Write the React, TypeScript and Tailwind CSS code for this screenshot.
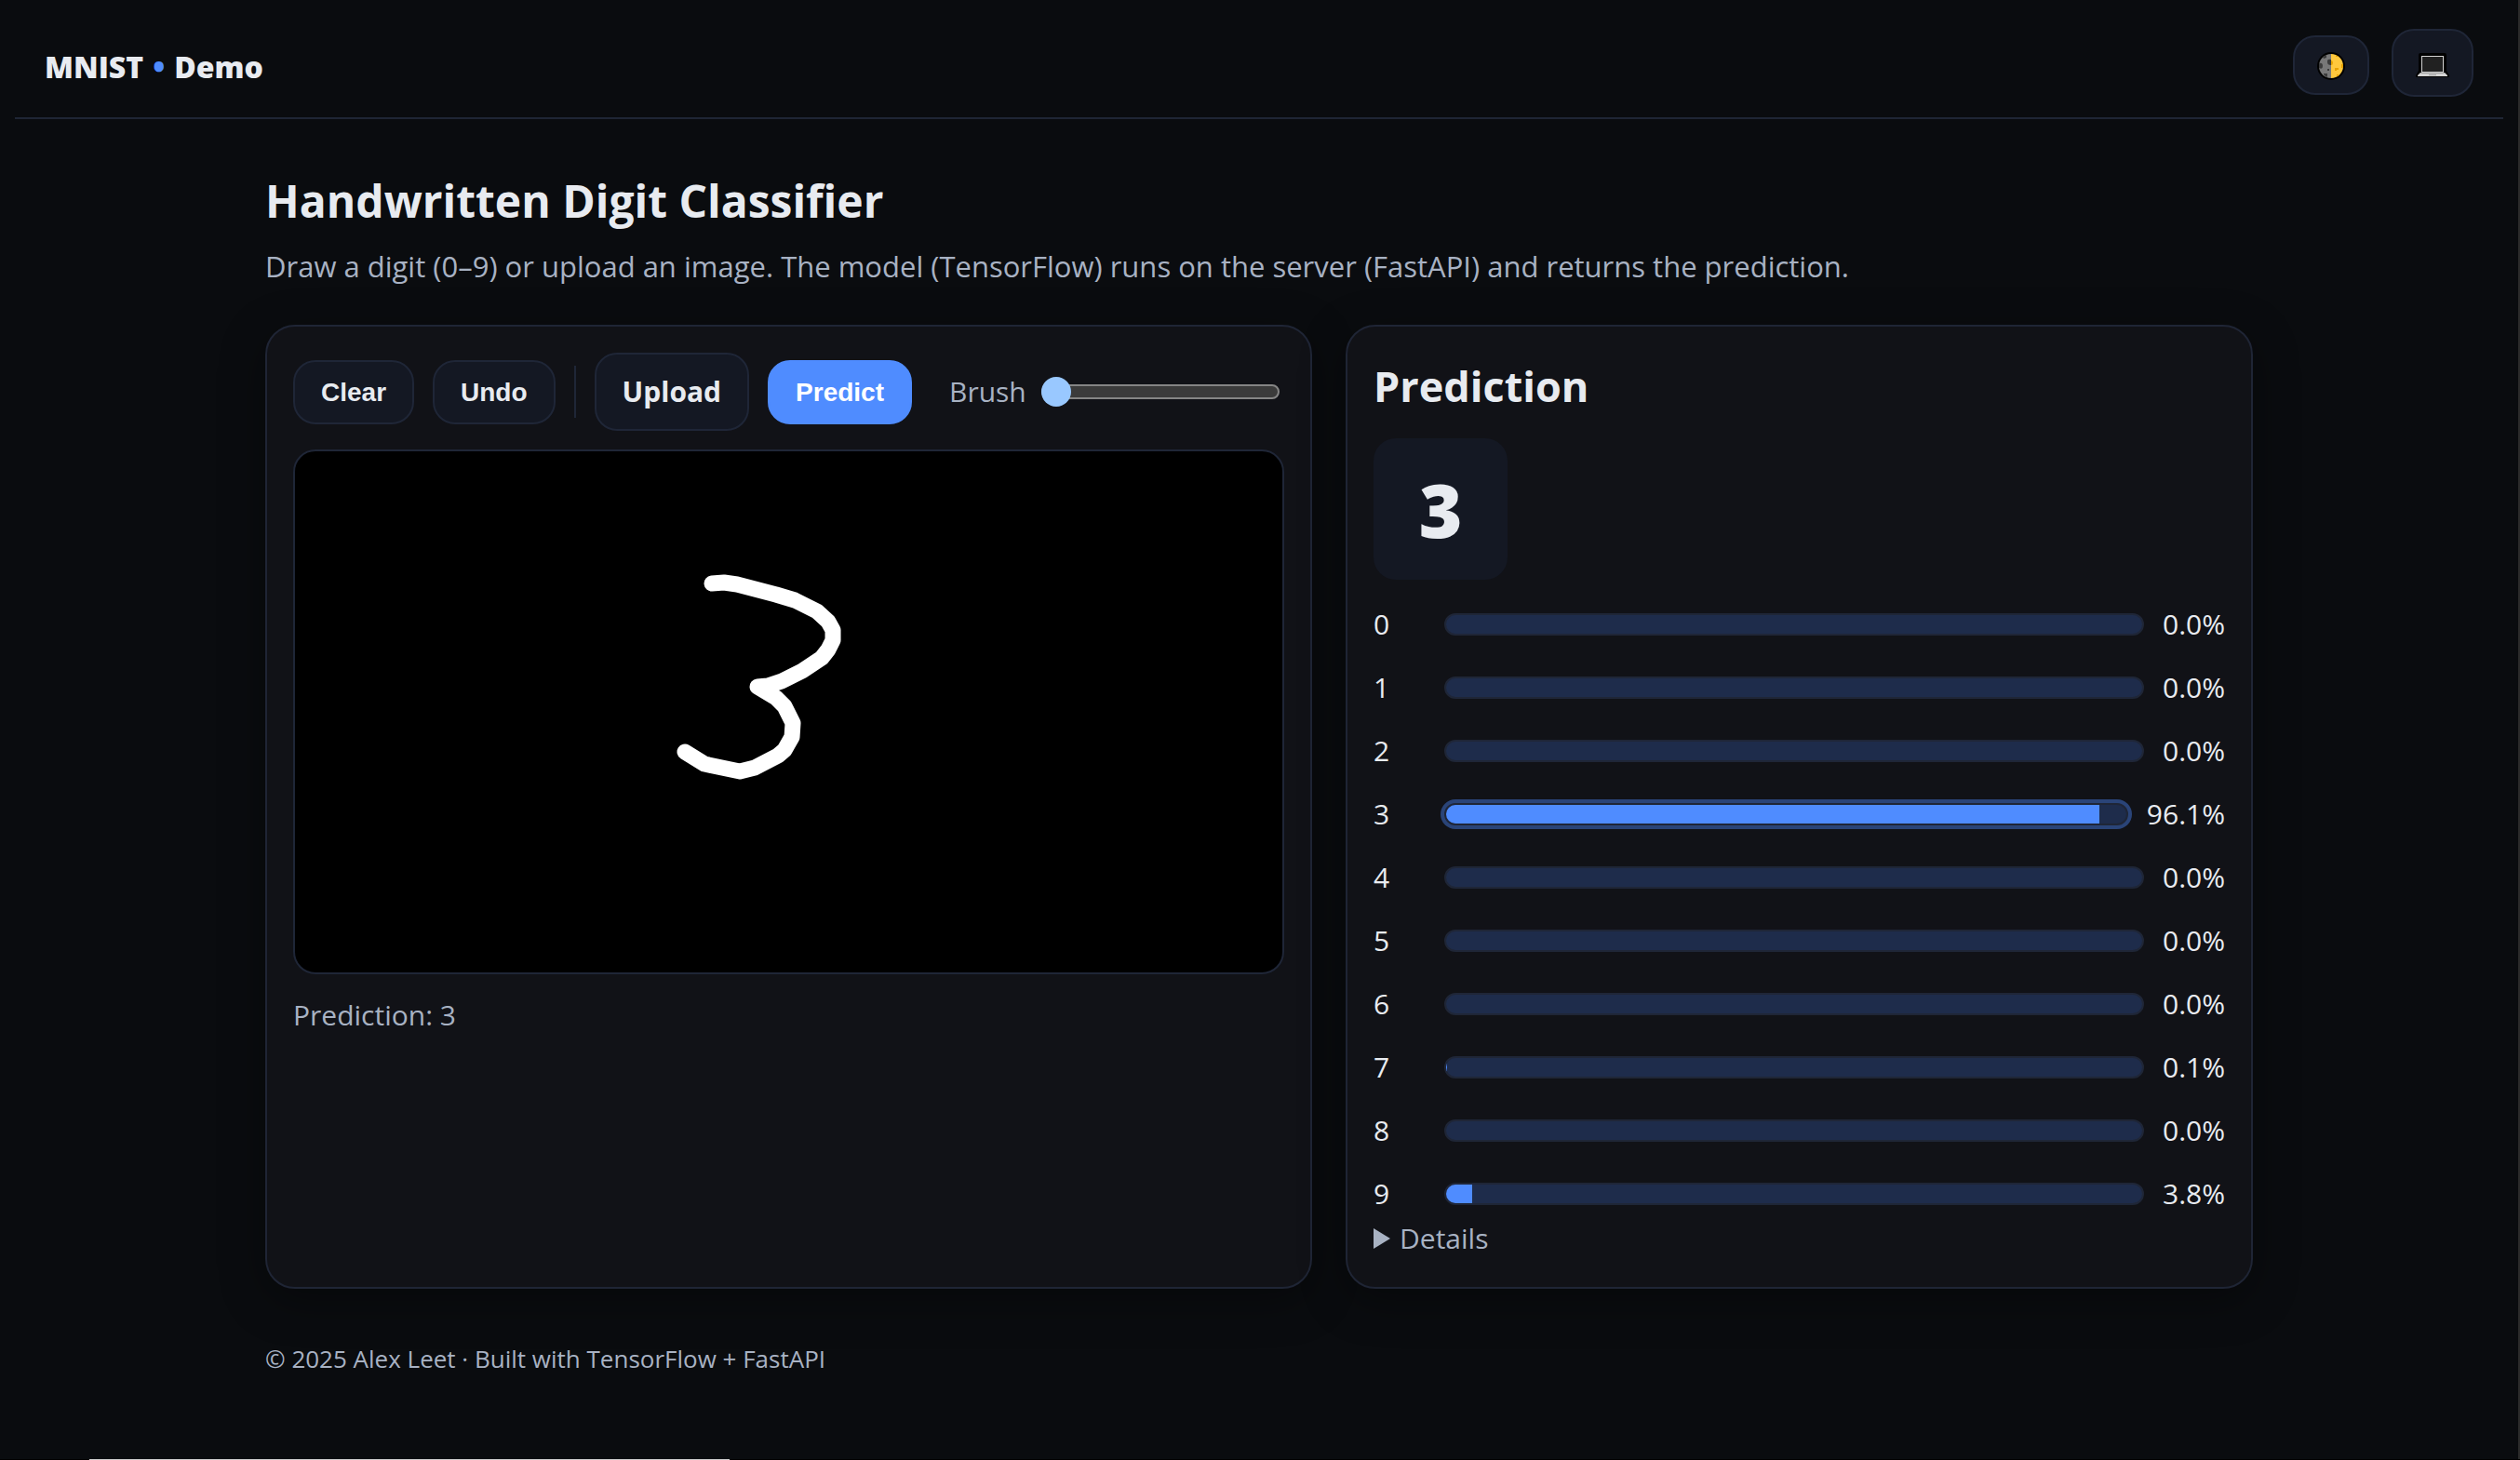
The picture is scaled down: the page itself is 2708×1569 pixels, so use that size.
import { useState } from "react";

const scores = [0, 0, 0, 96.1, 0, 0, 0, 0.1, 0, 3.8];

const control =
  "rounded-3xl border-2 border-[#1f2637] bg-[#141823] text-[#e8ebf0]";
const card =
  "rounded-[32px] border-2 border-[#1f2535] bg-[#111217] p-7 shadow-[0_12px_48px_rgba(0,0,0,0.35)]";

function HalfMoon() {
  return (
    <svg viewBox="0 0 30 30" className="size-[30px]" aria-hidden="true">
      <circle cx="15" cy="15" r="15" fill="#000" />
      <path d="M15 2a13 13 0 0 0 0 26z" fill="#787878" />
      <path d="M15 2a13 13 0 0 1 0 26z" fill="#ffc83d" />
      <path d="M6 5l4-2v3l-3 1zM11 9q1-2 4-1v6q-4 0-4-3zM2 12q4-1 4 3t-4 2zM11 18h2v2h-2zM7 23h4v4q-3-1-4-3z" fill="#3b3b3b" />
      <path d="M15 9q2 0 2 2.500t-2 2.500zM19 17h4v2h-2v1h-2zM26 13h2v4h-2zM20 3l3 2h-3zM21 24h2v2h-2z" fill="#e8a200" />
    </svg>
  );
}

function Laptop() {
  return (
    <svg viewBox="0 0 36 30" className="h-[30px] w-9" aria-hidden="true">
      <path d="M5 1h26q2 0 2 2v17l3 5v2H0v-2l3-5V3q0-2 2-2z" fill="#000" />
      <path d="M6 4h24v18H6z" fill="#d3d3d3" />
      <path d="M7 5h22v16H7z" fill="#212121" />
      <path d="M5 22h26l3 3v1H2v-1z" fill="#d3d3d3" />
      <path d="M6 22h24l1 1H5zM14 24h8v1h-8z" fill="#9b9b9b" />
    </svg>
  );
}

function Bar({ digit, value, top }: { digit: number; value: number; top: boolean }) {
  return (
    <li className="grid grid-cols-[56px_1fr_auto] items-center gap-5">
      <span>{digit}</span>
      <span
        className={
          top
            ? "block h-6 overflow-hidden rounded-xl border-2 border-[#1f2637] bg-[#1e2c4b] ring-4 ring-[#2a4478]"
            : "block h-6 overflow-hidden rounded-xl border-2 border-[#1f2637] bg-[#1e2c4b]"
        }
      >
        <span className="block h-full bg-[#4f8cff]" style={{ width: `${value}%` }} />
      </span>
      <span>{value.toFixed(1)}%</span>
    </li>
  );
}

export default function App() {
  const [brush, setBrush] = useState(10);
  return (
    <div className="flex min-h-screen flex-col bg-black font-['Open_Sans',sans-serif] text-[30px] leading-[48px] text-[#e8ebf0]">
      <div className="flex-1 border-r-2 border-[#2b2b2b] bg-[#0a0c0f]">
        <header className="mx-4 flex items-center justify-between border-b-2 border-[#1f2535] px-8 pt-[31px] pb-[22px]">
          <div className="pt-2 text-[32px] font-extrabold">
            MNIST <span className="px-0.5 text-[#4f8cff]">•</span> Demo
          </div>
          <nav className="flex items-baseline gap-6">
            <button type="button" aria-label="Toggle theme" className={`${control} flex px-6 pt-4 pb-3.5`}>
              <HalfMoon />
            </button>
            <a href="#" aria-label="Source code" className={`${control} flex px-6 pt-[23px] pb-4`}>
              <Laptop />
            </a>
          </nav>
        </header>

        <main className="mx-auto max-w-[2200px] px-8 pt-12">
          <h1 className="text-[48px] leading-[80px] font-bold">Handwritten Digit Classifier</h1>
          <p className="mt-1.5 text-[31px] text-[#a8b2c3]">
            Draw a digit (0–9) or upload an image. The model (TensorFlow) runs on the server (FastAPI) and returns the prediction.
          </p>

          <div className="mt-[39px] grid grid-cols-[1.154fr_1fr] gap-9">
            <section className={card}>
              <div className="flex items-center gap-5">
                <button type="button" className={`${control} px-7 py-4 font-['Liberation_Sans',Arial,sans-serif] text-[28px] leading-[33px] font-bold`}>
                  Clear
                </button>
                <button type="button" className={`${control} px-7 py-4 font-['Liberation_Sans',Arial,sans-serif] text-[28px] leading-[33px] font-bold`}>
                  Undo
                </button>
                <span className="h-14 w-0.5 bg-[#1f2637]" />
                <label className={`${control} px-7 py-4 font-bold`}>
                  Upload
                  <input type="file" accept="image/*" className="sr-only" />
                </label>
                <button type="button" className="rounded-3xl border-2 border-[#4f8cff] bg-[#4f8cff] px-7 py-4 font-['Liberation_Sans',Arial,sans-serif] text-[28px] leading-[33px] font-bold text-white">
                  Predict
                </button>
                <label className="ml-5 flex items-center gap-4 text-[#a8b2c3]">
                  Brush
                  <input
                    type="range"
                    min={10}
                    max={40}
                    value={brush}
                    onChange={(e) => setBrush(Number(e.target.value))}
                    className="h-4 w-[256px] appearance-none rounded-full border-2 border-[#858585] bg-[#3b3b3b] [&::-webkit-slider-thumb]:-ml-0.5 [&::-webkit-slider-thumb]:size-8 [&::-webkit-slider-thumb]:appearance-none [&::-webkit-slider-thumb]:rounded-full [&::-webkit-slider-thumb]:bg-[#99c8ff]"
                  />
                </label>
              </div>
              <div className="mt-5 overflow-hidden rounded-3xl border-2 border-[#1f2637] bg-black">
                <svg viewBox="0 0 1061 560" className="block w-full" role="img" aria-label="Drawn digit">
                  <path
                    transform="translate(383 105)"
                    d="M65 37L78 36L92 38L134 49L154 55L178 67L190 78L195 87L195 98L190 108L183 117L162 131L140 142L125 147L114 148L134 160L143 169L152 187L151 202L143 216L136 222L111 235L95 239L57 231L36 218"
                    fill="none"
                    stroke="#fff"
                    strokeWidth="17"
                    strokeLinecap="round"
                    strokeLinejoin="round"
                  />
                </svg>
              </div>
              <p className="mt-5 text-[#a8b2c3]">Prediction: 3</p>
            </section>

            <section className={card}>
              <h2 className="text-[45px] leading-[72px] font-bold">Prediction</h2>
              <div className="mt-5 flex h-[152px] w-36 items-center justify-center rounded-3xl bg-[#141823] text-[80px] font-extrabold">
                3
              </div>
              <ul className="mt-6 flex flex-col gap-5">
                {scores.map((value, digit) => (
                  <Bar key={digit} digit={digit} value={value} top={digit === 3} />
                ))}
              </ul>
              <details className="group text-[#a8b2c3]">
                <summary className="flex list-none items-center gap-2.5">
                  <svg viewBox="0 0 18 22" className="h-[22px] w-[18px] group-open:rotate-90" aria-hidden="true">
                    <path d="M0 0L18 11L0 22z" fill="currentColor" />
                  </svg>
                  Details
                </summary>
                <p>Input 28 × 28, grayscale</p>
              </details>
            </section>
          </div>

          <footer className="py-[51px] text-[26px] text-[#a8b2c3]">
            © 2025 Alex Leet · Built with TensorFlow + FastAPI
          </footer>
        </main>
      </div>
      <div className="ml-24 h-px w-[688px] bg-[#cccccc]" />
    </div>
  );
}
